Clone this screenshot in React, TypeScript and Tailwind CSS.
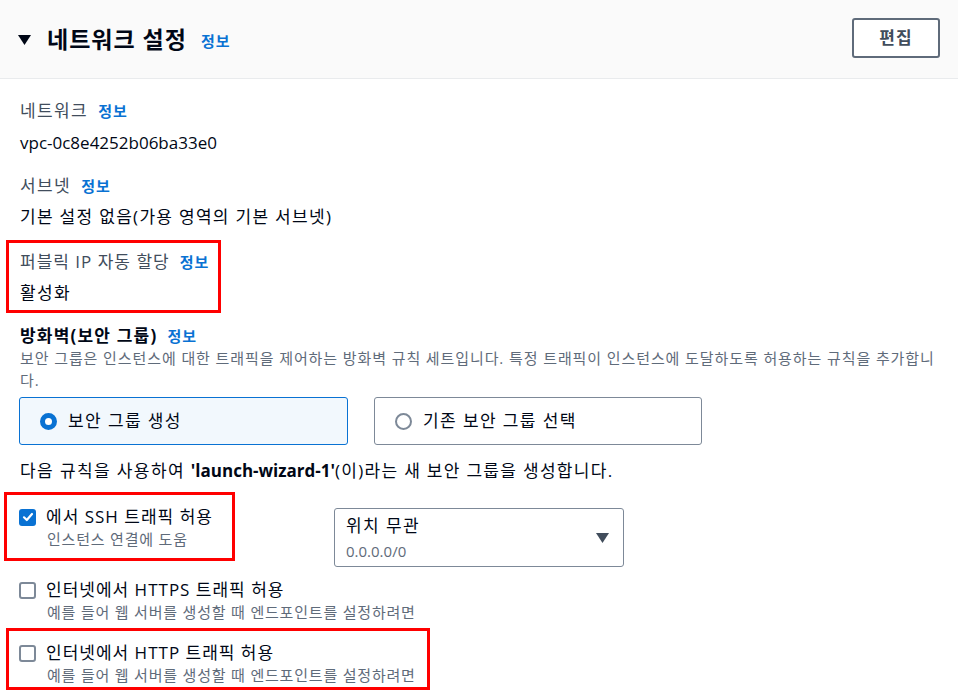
const font = { fontFamily: '"Open Sans", "Noto Sans CJK KR", sans-serif' };

const Info = () => (
  <span className="ml-[10px] text-[15px] font-bold tracking-[1px] text-[#0972d3]">정보</span>
);

const Checkbox = ({ checked }: { checked?: boolean }) =>
  checked ? (
    <span className="flex h-[17px] w-[17px] shrink-0 items-center justify-center rounded-[3px] bg-[#0972d3]">
      <svg width="12" height="12" viewBox="0 0 12 12">
        <path d="M2 6.3 L4.8 9 L10 3" fill="none" stroke="white" strokeWidth="2.2" strokeLinecap="round" strokeLinejoin="round" />
      </svg>
    </span>
  ) : (
    <span className="block h-[17px] w-[17px] shrink-0 rounded-[3px] border-2 border-[#7d8998] bg-white" />
  );

const CheckRow = ({ checked, title, sub }: { checked?: boolean; title: string; sub: string }) => (
  <div>
    <div className="flex items-center leading-[22px]">
      <span className="ml-[-1px] block">
        <Checkbox checked={checked} />
      </span>
      <span className="ml-[10px] text-[17px] tracking-[1px] text-[#000716]">{title}</span>
    </div>
    <div className="mt-[1px] pl-[27px] text-[15px] leading-[20px] tracking-[0.8px] text-[#5f6b7a]">{sub}</div>
  </div>
);

export default function App() {
  return (
    <div className="h-[697px] w-[958px] overflow-hidden bg-white text-[#000716]" style={font}>
      {/* header */}
      <div className="flex h-[79px] items-center justify-between border-b border-[#e9ebed] bg-[#fafafa] pl-[18px] pr-[18px]">
        <div className="flex items-center">
          <svg width="13" height="10" viewBox="0 0 13 10" className="mt-[1px]">
            <path d="M0 0 H13 L6.5 10 Z" fill="#000716" />
          </svg>
          <span className="ml-[16px] text-[23px] font-bold leading-[30px] tracking-[1px]">네트워크 설정</span>
          <span className="ml-[4px] mt-[3px]">
            <Info />
          </span>
        </div>
        <button className="mt-[-2px] flex h-[40px] w-[88px] items-center justify-center rounded-[3px] border-2 border-[#5f6b7a] bg-white text-[17px] font-bold tracking-[1px] text-[#414d5c]">
          편집
        </button>
      </div>

      <div className="pl-[20px]">
        <div className="mt-[21px] flex items-center leading-[22px]">
          <span className="text-[17px] tracking-[1.4px] text-[#414d5c]">네트워크</span>
          <Info />
        </div>
        <div className="mt-[10px] text-[17px] leading-[22px]">vpc-0c8e4252b06ba33e0</div>
        <div className="mt-[21px] flex items-center leading-[22px]">
          <span className="text-[17px] tracking-[1.4px] text-[#414d5c]">서브넷</span>
          <Info />
        </div>
        <div className="mt-[9px] text-[17px] leading-[22px] tracking-[1.3px]">기본 설정 없음(가용 영역의 기본 서브넷)</div>

        <div className="ml-[-14px] mt-[12px] w-[215px] border-[3px] border-[#ff0000] pb-[6px] pl-[11px] pt-[8px]">
          <div className="flex items-center leading-[22px]">
            <span className="text-[17px] tracking-[1px] text-[#414d5c]">퍼블릭 IP 자동 할당</span>
            <Info />
          </div>
          <div className="mt-[9px] text-[17px] leading-[22px] tracking-[1.4px]">활성화</div>
        </div>

        <div className="mt-[12px] flex items-center leading-[22px]">
          <span className="text-[17px] font-bold tracking-[1.2px]">방화벽(보안 그룹)</span>
          <Info />
        </div>
        <div className="pr-[20px] text-[15px] leading-[22px] tracking-[0.9px] text-[#5f6b7a]">
          보안 그룹은 인스턴스에 대한 트래픽을 제어하는 방화벽 규칙 세트입니다. 특정 트래픽이 인스턴스에 도달하도록 허용하는 규칙을 추가합니다.
        </div>

        <div className="mt-[6px] flex gap-[26px]">
          <div className="ml-[-1px] flex h-[48px] w-[329px] items-center rounded-[3px] border border-[#0972d3] bg-[#f2f8fd] pl-[20px]">
            <span className="block h-[17px] w-[17px] rounded-full border-[5px] border-[#0972d3] bg-white" />
            <span className="ml-[11px] text-[17px] tracking-[1.4px]">보안 그룹 생성</span>
          </div>
          <div className="flex h-[48px] w-[328px] items-center rounded-[3px] border border-[#7d8998] bg-white pl-[20px]">
            <span className="block h-[17px] w-[17px] rounded-full border-2 border-[#7d8998] bg-white" />
            <span className="ml-[11px] text-[17px] tracking-[1.4px]">기존 보안 그룹 선택</span>
          </div>
        </div>

        <div className="mt-[15px] text-[17px] leading-[22px]">
          <span className="tracking-[1.4px]">다음 규칙을 사용하여 </span>
          <span className="font-bold">'launch-wizard-1'</span>
          <span className="tracking-[1.3px]">(이)라는 새 보안 그룹을 생성합니다.</span>
        </div>

        <div className="mt-[10px] flex items-start">
          <div className="ml-[-16px] w-[231px] border-[3px] border-[#ff0000] pb-[9px] pl-[13px] pt-[11px]">
            <CheckRow checked title="에서 SSH 트래픽 허용" sub="인스턴스 연결에 도움" />
          </div>
          <div className="ml-[99px] mt-[16px] flex h-[59px] w-[290px] items-center justify-between rounded-[3px] border border-[#7d8998] bg-white pl-[11px] pr-[14px]">
            <div>
              <div className="text-[17px] leading-[24px] tracking-[1.4px]">위치 무관</div>
              <div className="mt-[3px] text-[15px] leading-[20px] text-[#5f6b7a]">0.0.0.0/0</div>
            </div>
            <svg width="13" height="10" viewBox="0 0 13 10">
              <path d="M0 0 H13 L6.5 10 Z" fill="#414d5c" />
            </svg>
          </div>
        </div>

        <div className="mt-[12px]">
          <CheckRow title="인터넷에서 HTTPS 트래픽 허용" sub="예를 들어 웹 서버를 생성할 때 엔드포인트를 설정하려면" />
        </div>

        <div className="ml-[-14px] mt-[6px] w-[424px] border-[3px] border-[#ff0000] pb-[2px] pl-[11px] pt-[11px]">
          <CheckRow title="인터넷에서 HTTP 트래픽 허용" sub="예를 들어 웹 서버를 생성할 때 엔드포인트를 설정하려면" />
        </div>
      </div>
    </div>
  );
}
